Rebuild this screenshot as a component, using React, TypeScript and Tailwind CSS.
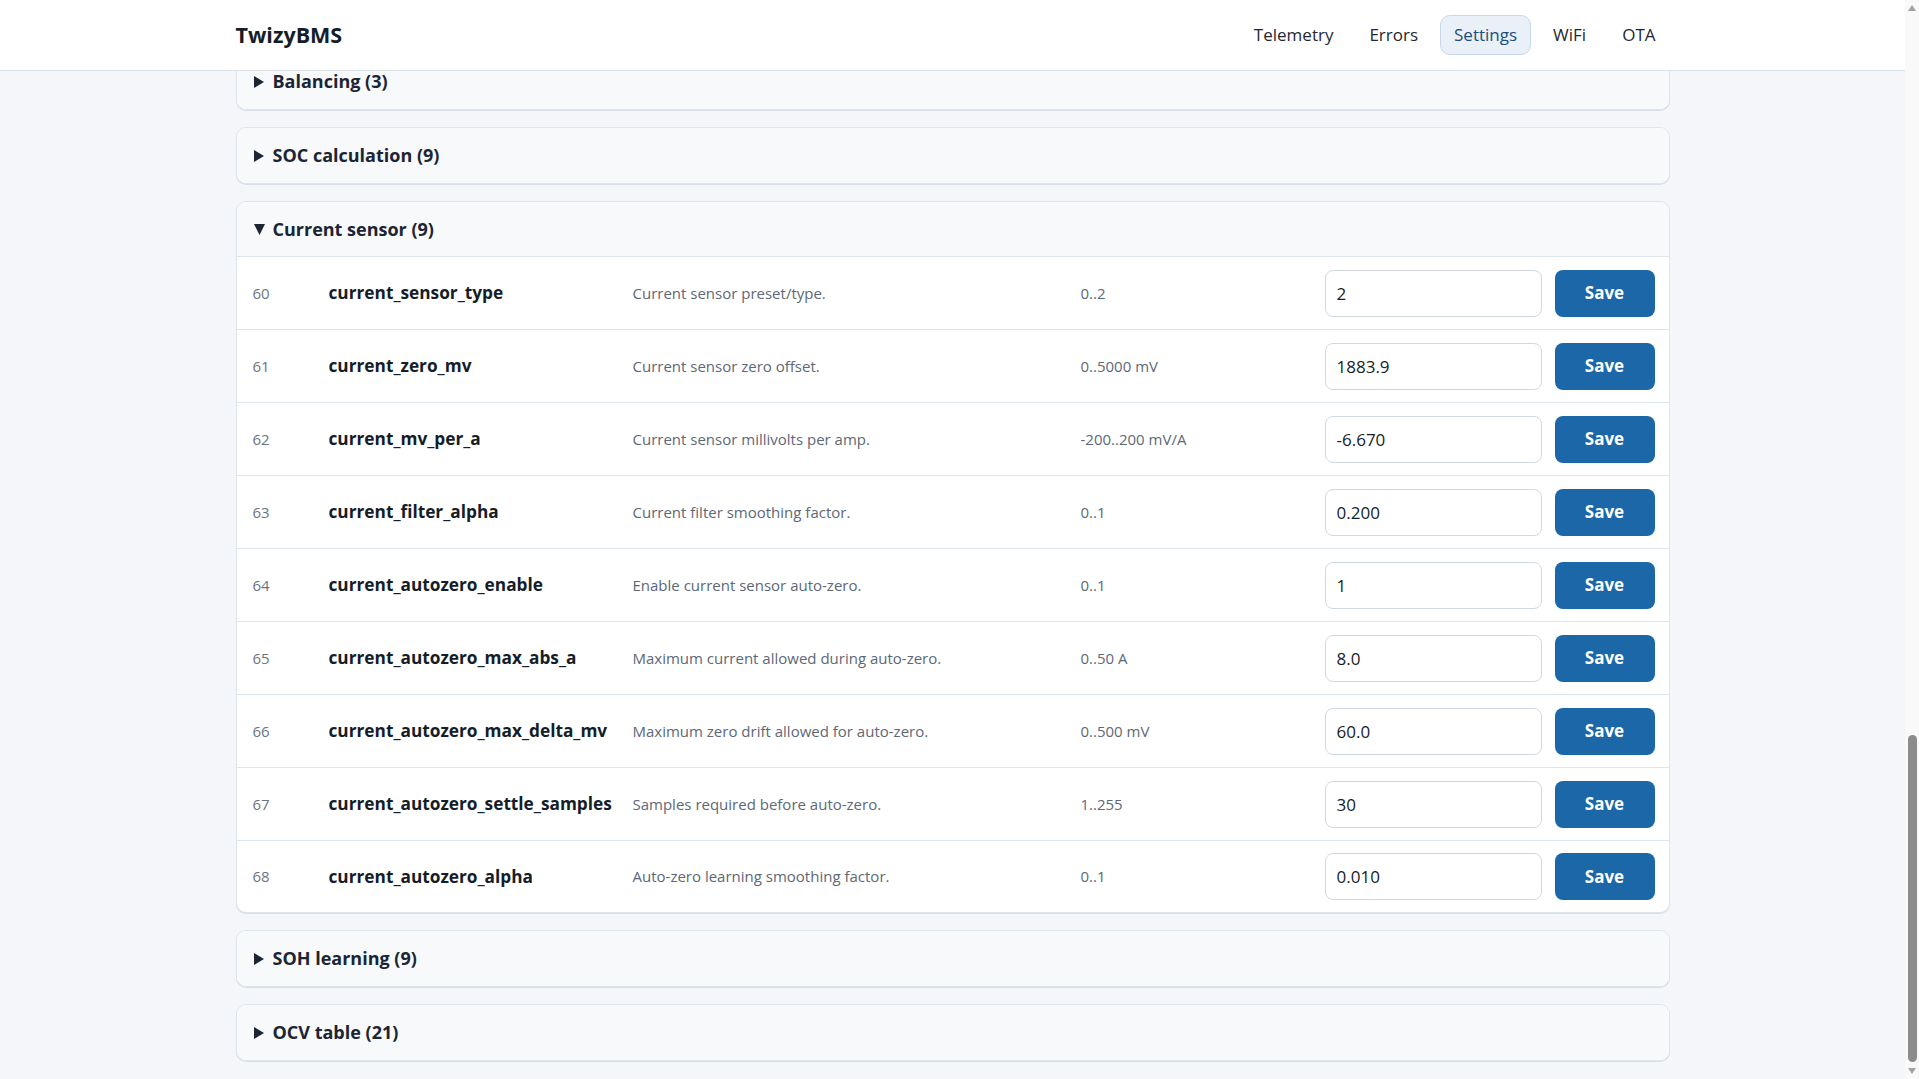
import { useLayoutEffect, useRef } from "react";

type Param = {
  id: number;
  name: string;
  desc: string;
  range: string;
  value: string;
};

const params: Param[] = [
  { id: 60, name: "current_sensor_type", desc: "Current sensor preset/type.", range: "0..2", value: "2" },
  { id: 61, name: "current_zero_mv", desc: "Current sensor zero offset.", range: "0..5000 mV", value: "1883.9" },
  { id: 62, name: "current_mv_per_a", desc: "Current sensor millivolts per amp.", range: "-200..200 mV/A", value: "-6.670" },
  { id: 63, name: "current_filter_alpha", desc: "Current filter smoothing factor.", range: "0..1", value: "0.200" },
  { id: 64, name: "current_autozero_enable", desc: "Enable current sensor auto-zero.", range: "0..1", value: "1" },
  { id: 65, name: "current_autozero_max_abs_a", desc: "Maximum current allowed during auto-zero.", range: "0..50 A", value: "8.0" },
  { id: 66, name: "current_autozero_max_delta_mv", desc: "Maximum zero drift allowed for auto-zero.", range: "0..500 mV", value: "60.0" },
  { id: 67, name: "current_autozero_settle_samples", desc: "Samples required before auto-zero.", range: "1..255", value: "30" },
  { id: 68, name: "current_autozero_alpha", desc: "Auto-zero learning smoothing factor.", range: "0..1", value: "0.010" },
];

const navItems = ["Telemetry", "Errors", "Settings", "WiFi", "OTA"];

function Marker({ open }: { open: boolean }) {
  return open ? (
    <svg width="11" height="11" viewBox="0 0 11 11" className="mr-[8px] shrink-0">
      <path d="M0 0 L11 0 L5.5 11 Z" fill="#1b2533" />
    </svg>
  ) : (
    <svg width="10" height="12" viewBox="0 0 10 12" className="mr-[9px] shrink-0">
      <path d="M0 0 L10 6 L0 12 Z" fill="#1b2533" />
    </svg>
  );
}

function Group({ title, open, children }: { title: string; open?: boolean; children?: React.ReactNode }) {
  return (
    <section className="overflow-hidden rounded-[10px] border border-[#dde4ec] bg-white shadow-[0_1px_0_#d8dfe9]">
      <div
        className={
          "flex h-[55px] items-center bg-[#f8f9fb] px-[17px] text-[18px] font-bold text-[#1b2533] " +
          (open ? "border-b border-[#dde4ec]" : "")
        }
      >
        <Marker open={!!open} />
        <span>{title}</span>
      </div>
      {open ? children : null}
    </section>
  );
}

function ParamRow({ p, last }: { p: Param; last: boolean }) {
  return (
    <div className={"flex items-center pl-4 pr-[14px] " + (last ? "h-[71px]" : "h-[73px] border-b border-[#dde4ec]")}>
      <span className="w-[76px] text-[15px] text-[#6b7480]">{p.id}</span>
      <span className="w-[304px] text-[17.25px] font-bold text-[#151d28]">{p.name}</span>
      <span className="w-[448px] text-[15px] text-[#5d6876]">{p.desc}</span>
      <span className="flex-1 text-[15px] text-[#5d6876]">{p.range}</span>
      <input
        defaultValue={p.value}
        className="h-[47px] w-[217px] rounded-[8px] border border-[#cfd9e4] bg-white px-[11px] text-[17px] text-[#151d28] outline-none"
      />
      <button className="ml-[13px] h-[47px] w-[100px] rounded-[8px] bg-[#1b67a7] text-[17px] font-bold text-white">
        Save
      </button>
    </div>
  );
}

function Scrollbar() {
  return (
    <div className="flex h-screen w-[14px] shrink-0 flex-col items-center bg-[#f9f9f9]">
      <div className="flex h-[16px] items-center justify-center">
        <svg width="8" height="6" viewBox="0 0 8 6">
          <path d="M0 6 L4 0 L8 6 Z" fill="#a3a3a3" />
        </svg>
      </div>
      <div className="flex-1" />
      <div className="ml-[1px] h-[327px] w-[9px] rounded-full bg-[#8c8c8c]" />
      <div className="flex h-[17px] items-center justify-center">
        <svg width="8" height="6" viewBox="0 0 8 6">
          <path d="M0 0 L8 0 L4 6 Z" fill="#a3a3a3" />
        </svg>
      </div>
    </div>
  );
}

export default function App() {
  const scroller = useRef<HTMLDivElement>(null);

  useLayoutEffect(() => {
    const el = scroller.current;
    if (el) el.scrollTop = el.scrollHeight;
  }, []);

  return (
    <div className="flex h-screen overflow-hidden bg-[#f4f6f9] [font-family:'Open_Sans',sans-serif]">
      <div ref={scroller} className="h-screen flex-1 overflow-y-scroll [scrollbar-width:none]">
        <header className="sticky top-0 z-10 h-[71px] border-b border-[#dbe2ea] bg-white">
          <div className="mx-auto flex h-full w-[1434px] items-center justify-between">
            <span className="text-[21.5px] font-bold text-[#151d28]">TwizyBMS</span>
            <nav className="flex items-center gap-2">
              {navItems.map((item) => (
                <a
                  key={item}
                  className={
                    "flex h-[40px] items-center rounded-[10px] border px-[13px] text-[17px] " +
                    (item === "Settings"
                      ? "border-[#c7d7e8] bg-[#e9f0f8] text-[#1f4d78]"
                      : "border-transparent text-[#1f2733]")
                  }
                >
                  {item}
                </a>
              ))}
            </nav>
          </div>
        </header>

        <main className="mx-auto flex w-[1434px] flex-col gap-[17px] pb-[18px]">
          <Group title="Balancing (3)" />
          <Group title="SOC calculation (9)" />
          <Group title="Current sensor (9)" open>
            {params.map((p, i) => (
              <ParamRow key={p.id} p={p} last={i === params.length - 1} />
            ))}
          </Group>
          <Group title="SOH learning (9)" />
          <Group title="OCV table (21)" />
        </main>
      </div>
      <Scrollbar />
    </div>
  );
}
